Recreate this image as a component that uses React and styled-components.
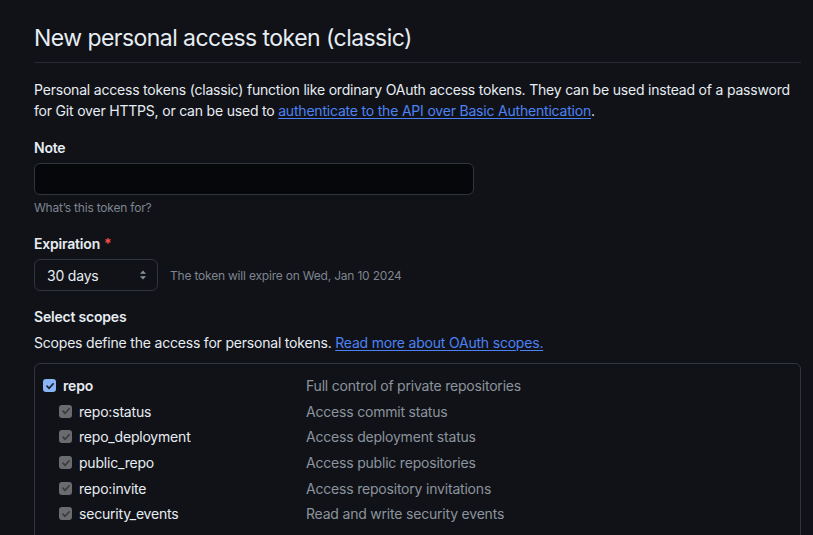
import React from "react";
import styled, { createGlobalStyle } from "styled-components";

const Global = createGlobalStyle`
  html, body { margin: 0; padding: 0; background: #111217; }
  body { font-family: Inter, "Liberation Sans", sans-serif; color: #e6edf3; -webkit-font-smoothing: antialiased; letter-spacing: -0.2px; }
`;

const Page = styled.div`
  width: 813px;
  height: 535px;
  overflow: hidden;
  box-sizing: border-box;
  padding: 22px 12px 0 34px;
  background: #111217;
`;

const Heading = styled.h2`
  margin: 0;
  font-size: 23px;
  font-weight: 400;
  letter-spacing: -0.55px;
  line-height: 32px;
  color: #e6edf3;
  padding-bottom: 8px;
  border-bottom: 1px solid #262a31;
`;

const Intro = styled.p`
  margin: 16px 0 0;
  font-size: 14px;
  line-height: 21px;
  color: #e6edf3;
`;

const Link = styled.a`
  color: #4c82f5;
  text-decoration: underline;
  text-underline-offset: 2px;
`;

const Group = styled.div`
  margin-top: ${(p) => p.$top || 16}px;
`;

const Label = styled.div`
  font-size: 14px;
  font-weight: 600;
  line-height: 20px;
  color: #e6edf3;
  margin-bottom: 5px;
`;

const Required = styled.span`
  color: #f85149;
  margin-left: 4px;
`;

const TextInput = styled.div`
  width: 440px;
  height: 32px;
  box-sizing: border-box;
  border: 1px solid #30363d;
  border-radius: 6px;
  background: #05070b;
`;

const Hint = styled.div`
  font-size: 12px;
  line-height: 18px;
  color: #7d8590;
  margin-top: 4px;
`;

const Row = styled.div`
  display: flex;
  align-items: center;
  gap: 12px;
`;

const Select = styled.div`
  width: 124px;
  height: 32px;
  box-sizing: border-box;
  border: 1px solid #30363d;
  border-radius: 6px;
  background: #111217;
  display: flex;
  align-items: center;
  justify-content: space-between;
  padding: 0 6px 0 12px;
  font-size: 14px;
  color: #e6edf3;
`;

const InlineHint = styled.span`
  font-size: 12px;
  color: #7d8590;
`;

const Desc = styled.div`
  font-size: 14px;
  line-height: 21px;
  color: #e6edf3;
  margin-top: 5px;
`;

const ScopeBox = styled.div`
  margin-top: 10px;
  border: 1px solid #30363d;
  border-radius: 6px;
  padding: 9px 0 0 8px;
  height: 200px;
`;

const ScopeRow = styled.div`
  display: grid;
  grid-template-columns: 263px 1fr;
  align-items: center;
  height: 25.6px;
`;

const ScopeName = styled.label`
  display: flex;
  align-items: center;
  gap: 7px;
  padding-left: ${(p) => (p.$nested ? 16 : 0)}px;
  font-size: 14px;
  font-weight: ${(p) => (p.$nested ? 400 : 600)};
  color: #e6edf3;
`;

const ScopeDesc = styled.span`
  font-size: 14px;
  color: #8b949e;
`;

const Box = styled.span`
  width: 13px;
  height: 13px;
  border-radius: 3px;
  background: ${(p) => (p.$disabled ? "#6a6b6e" : "#8ab4f8")};
  display: inline-flex;
  align-items: center;
  justify-content: center;
  flex: none;
`;

const Check = ({ disabled }) => (
  <Box $disabled={disabled}>
    <svg width="10" height="10" viewBox="0 0 10 10">
      <path d="M2 5.2 L4.1 7.3 L8.2 2.8" fill="none" stroke={disabled ? "#3a3b3e" : "#1b1f2a"} strokeWidth="1.7" strokeLinecap="round" strokeLinejoin="round" />
    </svg>
  </Box>
);

const Arrows = () => (
  <svg width="16" height="16" viewBox="0 0 16 16">
    <path d="M8 3.5 L11 6.8 H5 Z" fill="#8b949e" />
    <path d="M8 12.5 L11 9.2 H5 Z" fill="#8b949e" />
  </svg>
);

const scopes = [
  ["repo", "Full control of private repositories", false],
  ["repo:status", "Access commit status", true],
  ["repo_deployment", "Access deployment status", true],
  ["public_repo", "Access public repositories", true],
  ["repo:invite", "Access repository invitations", true],
  ["security_events", "Read and write security events", true],
];

export default function App() {
  return (
    <Page>
      <Global />
      <Heading>New personal access token (classic)</Heading>
      <Intro>
        Personal access tokens (classic) function like ordinary OAuth access tokens. They can be used instead of a password for Git over HTTPS, or can be used to{" "}
        <Link>authenticate to the API over Basic Authentication</Link>.
      </Intro>
      <Group $top={17}>
        <Label>Note</Label>
        <TextInput />
        <Hint>What’s this token for?</Hint>
      </Group>
      <Group $top={17}>
        <Label>
          Expiration<Required>*</Required>
        </Label>
        <Row>
          <Select>
            <span>30 days</span>
            <Arrows />
          </Select>
          <InlineHint>The token will expire on Wed, Jan 10 2024</InlineHint>
        </Row>
      </Group>
      <Group $top={16}>
        <Label>Select scopes</Label>
        <Desc>
          Scopes define the access for personal tokens. <Link>Read more about OAuth scopes.</Link>
        </Desc>
        <ScopeBox>
          {scopes.map(([name, desc, nested]) => (
            <ScopeRow key={name}>
              <ScopeName $nested={nested}>
                <Check disabled={nested} />
                {name}
              </ScopeName>
              <ScopeDesc>{desc}</ScopeDesc>
            </ScopeRow>
          ))}
        </ScopeBox>
      </Group>
    </Page>
  );
}
